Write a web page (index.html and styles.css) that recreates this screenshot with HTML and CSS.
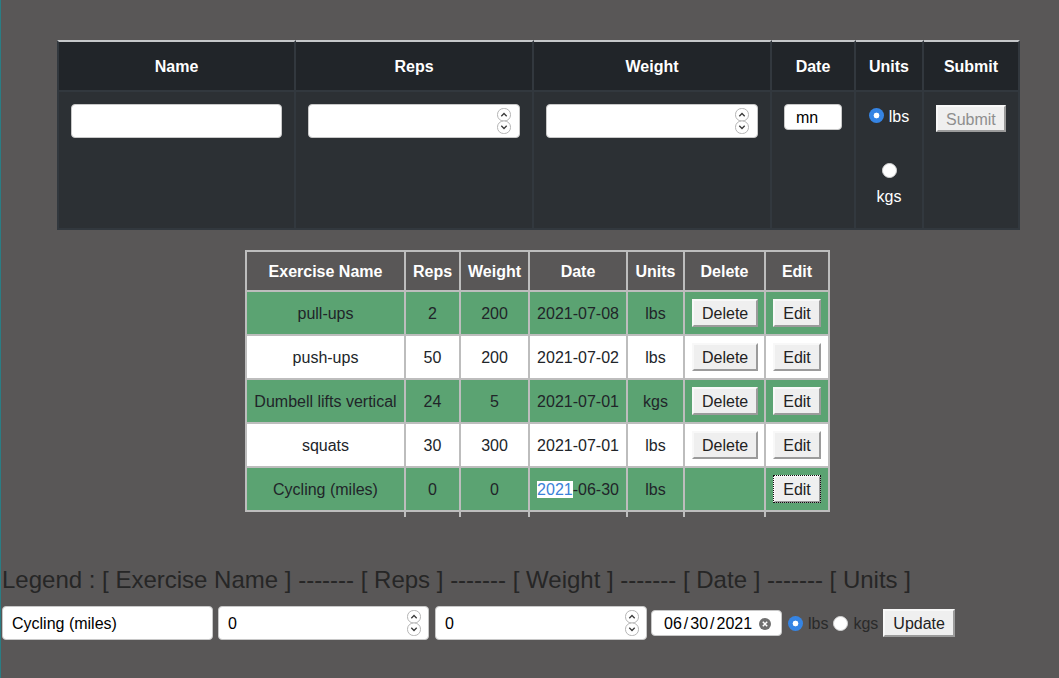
FILE: index.html
```html
<!DOCTYPE html>
<html lang="en">
<head>
<meta charset="utf-8">
<title>Exercise Tracker</title>
<link rel="stylesheet" href="styles.css">
</head>
<body>
<table class="entry">
  <thead>
    <tr>
      <th class="w-name">Name</th>
      <th class="w-reps">Reps</th>
      <th class="w-weight">Weight</th>
      <th class="w-date">Date</th>
      <th class="w-units">Units</th>
      <th class="w-submit">Submit</th>
    </tr>
  </thead>
  <tbody>
    <tr>
      <td><input class="box" type="text"></td>
      <td>
        <div class="numbox">
          <input class="numfield" type="text">
          <svg class="spin" width="14" height="26" viewBox="0 0 14 26"><rect x="0.5" y="0.5" width="13" height="12.5" rx="6" fill="#fff" stroke="#b5b5b5"/><rect x="0.5" y="13" width="13" height="12.5" rx="6" fill="#fff" stroke="#b5b5b5"/><path d="M4.3 8.2 L7 5.5 L9.7 8.2" fill="none" stroke="#3a3a3a" stroke-width="1.3"/><path d="M4.3 17.8 L7 20.5 L9.7 17.8" fill="none" stroke="#3a3a3a" stroke-width="1.3"/></svg>
        </div>
      </td>
      <td>
        <div class="numbox">
          <input class="numfield" type="text">
          <svg class="spin" width="14" height="26" viewBox="0 0 14 26"><rect x="0.5" y="0.5" width="13" height="12.5" rx="6" fill="#fff" stroke="#b5b5b5"/><rect x="0.5" y="13" width="13" height="12.5" rx="6" fill="#fff" stroke="#b5b5b5"/><path d="M4.3 8.2 L7 5.5 L9.7 8.2" fill="none" stroke="#3a3a3a" stroke-width="1.3"/><path d="M4.3 17.8 L7 20.5 L9.7 17.8" fill="none" stroke="#3a3a3a" stroke-width="1.3"/></svg>
        </div>
      </td>
      <td><input class="box date-mini" type="text" value="mn"></td>
      <td>
        <div class="units">
          <label class="u-lbs"><input class="radio" type="radio" name="unit" checked><span>lbs</span></label>
          <label class="u-kgs"><input class="radio" type="radio" name="unit"><span>kgs</span></label>
        </div>
      </td>
      <td><button class="btn btn-submit" disabled>Submit</button></td>
    </tr>
  </tbody>
</table>

<table class="log">
  <thead>
    <tr>
      <th class="l-name">Exercise Name</th>
      <th class="l-reps">Reps</th>
      <th class="l-weight">Weight</th>
      <th class="l-date">Date</th>
      <th class="l-units">Units</th>
      <th class="l-del">Delete</th>
      <th class="l-edit">Edit</th>
    </tr>
  </thead>
  <tbody>
    <tr>
      <td>pull-ups</td><td>2</td><td>200</td><td>2021-07-08</td><td>lbs</td>
      <td><button class="btn">Delete</button></td><td><button class="btn">Edit</button></td>
    </tr>
    <tr>
      <td>push-ups</td><td>50</td><td>200</td><td>2021-07-02</td><td>lbs</td>
      <td><button class="btn">Delete</button></td><td><button class="btn">Edit</button></td>
    </tr>
    <tr>
      <td>Dumbell lifts vertical</td><td>24</td><td>5</td><td>2021-07-01</td><td>kgs</td>
      <td><button class="btn">Delete</button></td><td><button class="btn">Edit</button></td>
    </tr>
    <tr>
      <td>squats</td><td>30</td><td>300</td><td>2021-07-01</td><td>lbs</td>
      <td><button class="btn">Delete</button></td><td><button class="btn">Edit</button></td>
    </tr>
    <tr>
      <td>Cycling (miles)</td><td>0</td><td>0</td><td><span class="sel">2021</span>-06-30</td><td>lbs</td>
      <td></td><td><button class="btn btn-focus">Edit</button></td>
    </tr>
  </tbody>
  <tfoot>
    <tr class="tail"><td></td><td></td><td></td><td></td><td></td><td></td><td></td></tr>
  </tfoot>
</table>

<div class="legend">Legend : [ Exercise Name ] ------- [ Reps ] ------- [ Weight ] ------- [ Date ] ------- [ Units ]</div>

<form class="update">
  <input class="ubox u-name" type="text" value="Cycling (miles)">
  <div class="numbox u-reps">
    <input class="numfield" type="text" value="0">
    <svg class="spin" width="14" height="26" viewBox="0 0 14 26"><rect x="0.5" y="0.5" width="13" height="12.5" rx="6" fill="#fff" stroke="#b5b5b5"/><rect x="0.5" y="13" width="13" height="12.5" rx="6" fill="#fff" stroke="#b5b5b5"/><path d="M4.3 8.2 L7 5.5 L9.7 8.2" fill="none" stroke="#3a3a3a" stroke-width="1.3"/><path d="M4.3 17.8 L7 20.5 L9.7 17.8" fill="none" stroke="#3a3a3a" stroke-width="1.3"/></svg>
  </div>
  <div class="numbox u-weight">
    <input class="numfield" type="text" value="0">
    <svg class="spin" width="14" height="26" viewBox="0 0 14 26"><rect x="0.5" y="0.5" width="13" height="12.5" rx="6" fill="#fff" stroke="#b5b5b5"/><rect x="0.5" y="13" width="13" height="12.5" rx="6" fill="#fff" stroke="#b5b5b5"/><path d="M4.3 8.2 L7 5.5 L9.7 8.2" fill="none" stroke="#3a3a3a" stroke-width="1.3"/><path d="M4.3 17.8 L7 20.5 L9.7 17.8" fill="none" stroke="#3a3a3a" stroke-width="1.3"/></svg>
  </div>
  <div class="u-date">
    <span>06</span><span class="slash">/</span><span>30</span><span class="slash">/</span><span>2021</span>
    <svg class="clear" width="12" height="12" viewBox="0 0 12 12"><circle cx="6" cy="6" r="6" fill="#6f6f6f"/><path d="M3.8 3.8 L8.2 8.2 M8.2 3.8 L3.8 8.2" stroke="#fff" stroke-width="1.5"/></svg>
  </div>
  <input class="radio u-r1" type="radio" name="uunit" checked>
  <span class="u-lbl u-l1">lbs</span>
  <input class="radio u-r2" type="radio" name="uunit">
  <span class="u-lbl u-l2">kgs</span>
  <button class="btn" type="button">Update</button>
</form>
</body>
</html>
```

FILE: styles.css
```css
* {
  box-sizing: border-box;
}

html {
  background: #595757;
}

body {
  margin: 0;
  min-height: 678px;
  padding-top: 40px;
  border-left: 1px solid #2a7d84;
  font-family: "Liberation Sans", Arial, sans-serif;
  font-size: 16px;
  color: #212529;
}

/* ---------- entry table ---------- */
.entry {
  border-collapse: separate;
  border-spacing: 0;
  table-layout: fixed;
  width: 963px;
  margin-left: 56px;
}

.entry th,
.entry td {
  padding: 12px;
  border-right: 2px solid #32383e;
  border-bottom: 2px solid #32383e;
}

.entry th:first-child,
.entry td:first-child {
  border-left: 2px solid #32383e;
}

.entry th {
  padding: 13px 12px 11px;
  border-top: 2px solid #c6c8ca;
  background: #212529;
  color: #fff;
  font-weight: bold;
  line-height: 24px;
  text-align: center;
}

.entry td {
  background: #2c3034;
  vertical-align: top;
}

.w-name { width: 239px; }
.w-reps { width: 238px; }
.w-weight { width: 238px; }
.w-date { width: 84px; }
.w-units { width: 68px; }
.w-submit { width: 96px; }

.box {
  display: block;
  width: 100%;
  height: 34px;
  padding: 0 9px;
  border: 1px solid #c8c8c8;
  border-radius: 4px;
  background: #fff;
  font: inherit;
  color: #000;
}

.date-mini {
  height: 26px;
  padding: 1px 11px 0;
}

.numbox {
  display: flex;
  align-items: center;
  width: 100%;
  height: 34px;
  padding-right: 8px;
  border: 1px solid #c8c8c8;
  border-radius: 4px;
  background: #fff;
}

.numfield {
  flex: 1;
  min-width: 0;
  height: 100%;
  padding: 1px 9px 0;
  border: 0;
  background: transparent;
  font: inherit;
  color: #000;
  outline: none;
}

.spin {
  flex: none;
  display: block;
}

.units {
  height: 112px;
  display: flex;
  flex-direction: column;
  align-items: center;
  color: #fff;
  line-height: 24px;
}

.u-lbs {
  display: flex;
  align-items: flex-start;
  padding-top: 1px;
}

.u-lbs .radio {
  margin: 3px 5px 0 0;
}

.u-kgs {
  display: flex;
  flex-direction: column;
  align-items: center;
  margin-top: 34px;
}

.u-kgs span {
  margin-top: 7px;
}

.radio {
  -webkit-appearance: none;
  appearance: none;
  flex: none;
  width: 15px;
  height: 15px;
  margin: 0;
  border: 1px solid #d4d4d4;
  border-radius: 50%;
  background: #fff;
}

.radio:checked {
  border: 0;
  background: radial-gradient(circle, #fff 0 2.6px, #3584e4 3.2px);
}

.btn {
  height: 28px;
  padding: 1px 8px 0;
  border: 2px solid;
  border-color: #f8f8f8 #9b9b9b #9b9b9b #f8f8f8;
  background: #efefef;
  font: inherit;
  color: #222;
  line-height: 23px;
}

.btn-submit {
  display: block;
  height: 27px;
  margin-top: 1px;
  color: #8e8e8e;
}

.btn-focus {
  outline: 1px dotted #111;
  outline-offset: -1px;
}

/* ---------- log table ---------- */
.log {
  border-collapse: separate;
  border-spacing: 0;
  table-layout: fixed;
  width: 585px;
  margin: 20px 0 0 244px;
}

.log th,
.log td {
  padding: 1px 7px 0;
  border-right: 2px solid #bdbdbd;
  border-bottom: 2px solid #bdbdbd;
  text-align: center;
  vertical-align: middle;
}

.log td .btn {
  margin-top: -2px;
}

.log th:first-child,
.log td:first-child {
  border-left: 2px solid #bdbdbd;
}

.log th {
  height: 42px;
  border-top: 2px solid #bdbdbd;
  background: #595757;
  color: #fff;
  font-weight: bold;
}

.log tbody td {
  height: 44px;
}

.log tbody tr:nth-child(odd) td {
  background: #5ba372;
}

.log tbody tr:nth-child(even) td {
  background: #fff;
}

.l-name { width: 161px; }
.l-reps { width: 55px; }
.l-weight { width: 69px; }
.l-date { width: 98px; }
.l-units { width: 57px; }
.l-del { width: 81px; }
.l-edit { width: 64px; }

.log .tail td {
  height: 5px;
  padding: 0;
  border-bottom: 0;
}

.log .tail td:first-child {
  border-left-color: transparent;
}

.log .tail td:last-child {
  border-right-color: transparent;
}

.sel {
  background: #fff;
  color: #3b82d8;
}

/* ---------- legend + update form ---------- */
.legend {
  margin-top: 49px;
  padding-left: 1px;
  font-size: 24px;
  line-height: 28px;
  color: #262626;
  white-space: nowrap;
}

.update {
  display: flex;
  align-items: center;
  margin: 12px 0 0;
  padding-left: 1px;
}

.ubox {
  height: 34px;
  padding: 1px 9px 0;
  border: 1px solid #c8c8c8;
  border-radius: 4px;
  background: #fff;
  font: inherit;
  color: #000;
}

.u-name {
  width: 211px;
  margin-right: 5px;
}

.update .numbox {
  padding-right: 7px;
}

.u-reps {
  width: 211px;
  margin-right: 6px;
}

.u-weight {
  width: 212px;
  margin-right: 4px;
}

.u-date {
  display: flex;
  align-items: center;
  width: 131px;
  height: 26px;
  margin-right: 6px;
  padding: 1px 10px 0 12px;
  border: 1px solid #c8c8c8;
  border-radius: 4px;
  background: #fff;
  color: #000;
}

.slash {
  margin: 0 2px;
}

.clear {
  margin-left: auto;
  display: block;
}

.u-r1 {
  margin-right: 5px;
}

.u-l1 {
  margin-right: 5px;
}

.u-r2 {
  margin-right: 5px;
}

.u-l2 {
  margin-right: 5px;
}

.u-lbl {
  color: #2a2a2a;
  padding-top: 1px;
}
```
